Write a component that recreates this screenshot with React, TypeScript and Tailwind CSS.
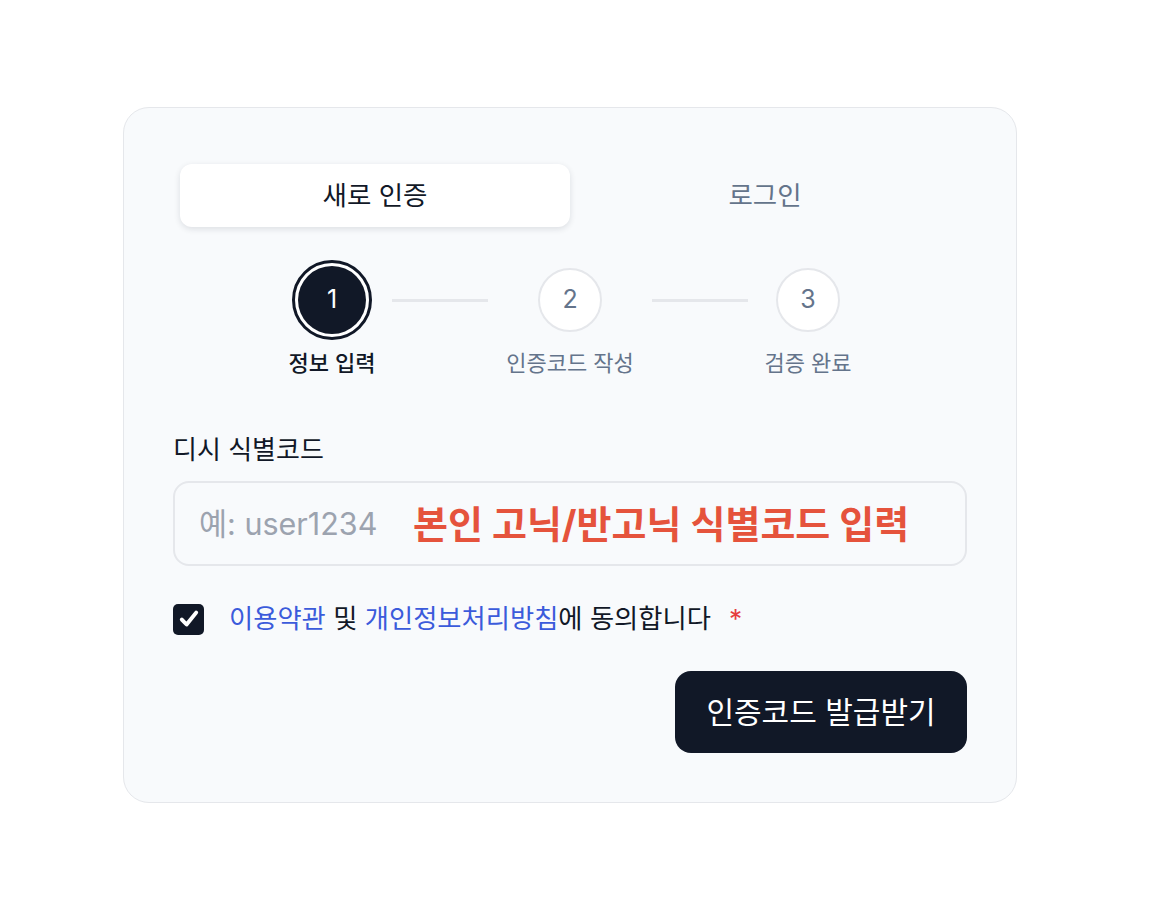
import React from "react";

const FONT = { fontFamily: '"Inter", "Noto Sans CJK KR", sans-serif' };

function Check() {
  return (
    <svg width="22" height="22" viewBox="0 0 20 20" fill="none">
      <path d="M3.5 10.5 L7.8 15 L16.5 4.2" stroke="white" strokeWidth="3.6" strokeLinecap="round" strokeLinejoin="round" />
    </svg>
  );
}

export default function App() {
  return (
    <div className="min-h-[902px] w-[1156px] bg-white pl-[123px] pt-[107px]" style={FONT}>
      <div className="w-[894px] rounded-[26px] border border-[#e5e7eb] bg-[#f8fafc] p-[49px]">
        {/* Tabs */}
        <div className="flex rounded-[14px] p-[7px]">
          <div className="flex h-[63px] w-[390px] items-center justify-center rounded-[12px] bg-white text-[26.5px] text-[#111827] shadow-[0_2px_6px_rgba(15,23,42,0.12)]">
            새로 인증
          </div>
          <div className="flex h-[63px] w-[390px] items-center justify-center text-[26.5px] text-[#64748b]">
            로그인
          </div>
        </div>

        {/* Stepper */}
        <div className="mt-[26px] flex h-[80px] items-center pl-[119px]">
          <div className="flex h-[80px] w-[80px] items-center justify-center rounded-full border-[3px] border-[#111827] bg-white p-[3px]">
            <div className="flex h-full w-full items-center justify-center rounded-full bg-[#111827] text-[25px] text-white">
              1
            </div>
          </div>
          <div className="ml-[20px] h-[3px] w-[96px] bg-[#e5e7eb]" />
          <div className="ml-[50px] flex h-[64px] w-[64px] items-center justify-center rounded-full border-2 border-[#e5e7eb] bg-white text-[25px] text-[#64748b]">
            2
          </div>
          <div className="ml-[50px] h-[3px] w-[96px] bg-[#e5e7eb]" />
          <div className="ml-[28px] flex h-[64px] w-[64px] items-center justify-center rounded-full border-2 border-[#e5e7eb] bg-white text-[25px] text-[#64748b]">
            3
          </div>
        </div>
        <div className="mt-[9px] flex gap-[38px] pl-[59px] text-[22px] leading-[28px]">
          <div className="w-[200px] text-center font-medium text-[#111827]">정보 입력</div>
          <div className="w-[200px] text-center text-[#64748b]">인증코드 작성</div>
          <div className="w-[200px] text-center text-[#64748b]">검증 완료</div>
        </div>

        {/* Field */}
        <div className="mt-[57px] text-[26px] leading-[32px] text-[#111827]">디시 식별코드</div>
        <div className="relative mt-[15px] flex h-[85px] items-center rounded-[16px] border-2 border-[#e5e7eb] bg-[#f8fafc] pl-[24px]">
          <span className="text-[30.5px] text-[#9ca3af]">예: user1234</span>
          <span className="absolute left-[238px] top-1/2 -translate-y-1/2 text-[38px] font-bold text-[#e5533c]">
            본인 고닉/반고닉 식별코드 입력
          </span>
        </div>

        {/* Agreement */}
        <div className="mt-[37px] flex h-[32px] items-center">
          <div className="flex h-[31px] w-[31px] items-center justify-center rounded-[5px] bg-[#111827]">
            <Check />
          </div>
          <div className="ml-[25px] text-[26.3px] leading-[32px] text-[#111827]">
            <span className="text-[#3b5bdb]">이용약관</span> 및{" "}
            <span className="text-[#3b5bdb]">개인정보처리방침</span>에 동의합니다
            <span className="ml-[18px] text-[#e53e3e]">*</span>
          </div>
        </div>

        {/* Button */}
        <div className="mt-[36px] flex justify-end">
          <div className="flex h-[82px] w-[292px] items-center justify-center rounded-[16px] bg-[#111827] text-[30px] text-white">
            인증코드 발급받기
          </div>
        </div>
      </div>
    </div>
  );
}
